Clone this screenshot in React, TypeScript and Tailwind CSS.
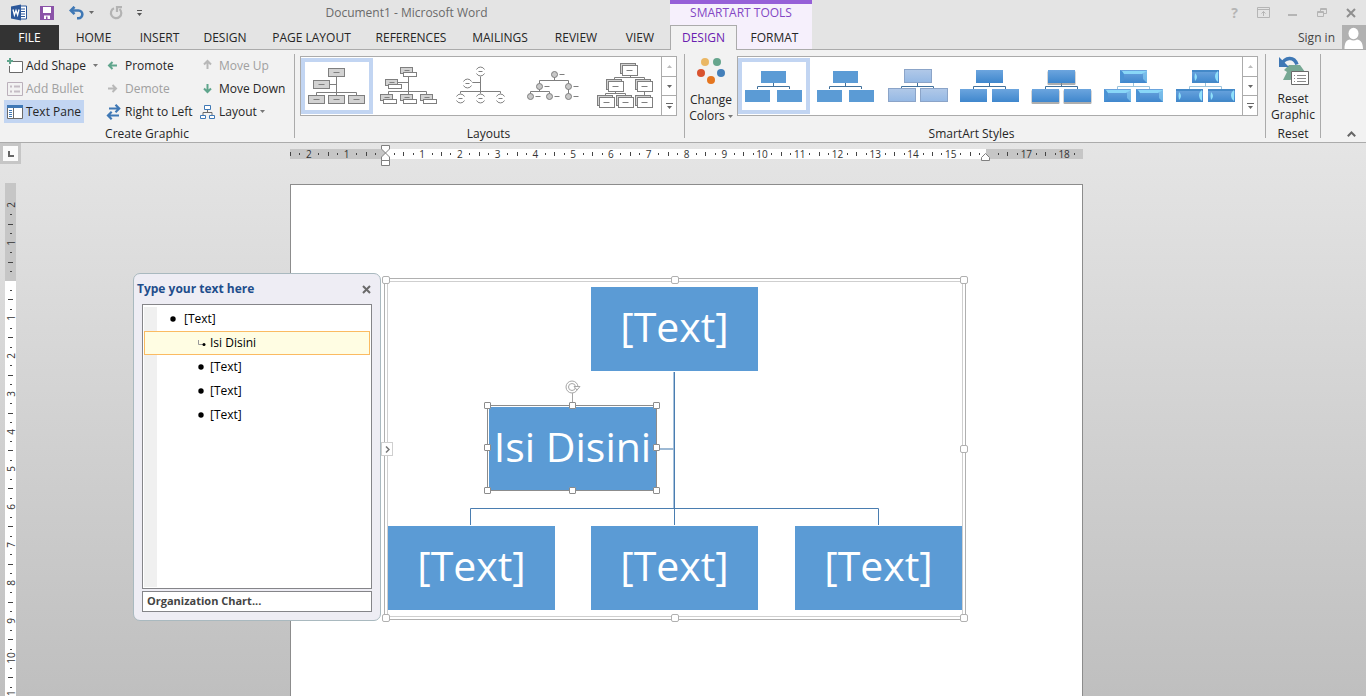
import type { ReactNode } from 'react';
import clsx from 'clsx';

/* ---------- shared bits ---------- */

function Caret({ className }: { className?: string }) {
  return (
    <svg viewBox="0 0 5 3" className={clsx('h-[3px] w-[5px] shrink-0', className)} fill="currentColor">
      <path d="M0 0h5L2.5 3z" />
    </svg>
  );
}

interface RibbonGroupProps {
  title: string;
  className?: string;
  children: ReactNode;
}

function RibbonGroup({ title, className, children }: RibbonGroupProps) {
  return (
    <section
      aria-label={title}
      className={clsx('my-1 flex flex-col justify-between border-r border-[#ababab]', className)}
    >
      {children}
      <h2 className="text-center leading-2 text-[#262626]">{title}</h2>
    </section>
  );
}

/* ---------- title bar and tabs ---------- */

function QuickAccess() {
  return (
    <div className="flex w-[143px] items-center pl-[10px]">
      <button aria-label="Word" className="mr-[13px]">
        <svg viewBox="0 0 17 17" className="size-[17px]">
          <path d="M9 2h7.5v13H9z" fill="#fff" stroke="#2b579a" />
          <path d="M11 5h4M11 7.5h4M11 10h4M11 12.5h4" stroke="#2b579a" />
          <path d="M1 2.5 11 .5v16L1 14.5z" fill="#2b579a" />
          <path d="M3 5.500 4.400 11 6 6.500 7.600 11 9 5.500" fill="none" stroke="#fff" strokeWidth="1.3" />
        </svg>
      </button>
      <button aria-label="Save" className="mr-[15px]">
        <svg viewBox="0 0 14 14" className="size-[14px]">
          <path d="M0 0h14v14H0z" fill="#8b53a8" />
          <path d="M3 1h8v6H3zM4 9.5h6V13H4z" fill="#fff" />
          <path d="M6 10.5h1.500V13H6z" fill="#8b53a8" />
        </svg>
      </button>
      <button aria-label="Undo" className="flex items-center gap-[5px] text-[#6a6a6a]">
        <svg viewBox="0 0 15 14" className="h-[14px] w-[15px]" fill="none" stroke="#3f78b5" strokeWidth="2.6">
          <path d="M2 4.5h7.500a3.800 3.800 0 0 1 0 7.700H8" />
          <path d="M5.500.8 1.800 4.500l3.700 3.700" />
        </svg>
        <Caret />
      </button>
      <button aria-label="Repeat" className="ml-[15px]">
        <svg viewBox="0 0 14 14" className="size-[14px]" fill="none" stroke="#b3b3b3" strokeWidth="2.2">
          <path d="M5 2.200A5.200 5.200 0 1 0 10.500 3" />
          <path d="M8 6V1.200h5" />
        </svg>
      </button>
      <button aria-label="Customize Quick Access Toolbar" className="ml-[14px] text-[#555]">
        <svg viewBox="0 0 5 6" className="h-[6px] w-[5px]" fill="currentColor">
          <path d="M0 0h5v1H0zM0 3h5L2.500 6z" />
        </svg>
      </button>
    </div>
  );
}

function WindowButtons() {
  return (
    <div className="ml-auto flex items-center text-[#b5b5b5]">
      <button aria-label="Help" className="w-[29px] text-sm font-bold leading-none">
        ?
      </button>
      <button aria-label="Ribbon Display Options" className="flex w-[29px] justify-center">
        <svg viewBox="0 0 13 11" className="h-[11px] w-[13px]" fill="none" stroke="currentColor">
          <path d="M.5.5h12v10H.5zM.5 2.500h12M6.500 9V4.500M4.500 6.500l2-2 2 2" />
        </svg>
      </button>
      <button aria-label="Minimize" className="flex w-[29px] justify-center">
        <span className="mt-1 h-[2px] w-[9px] bg-current" />
      </button>
      <button aria-label="Restore Down" className="flex w-[29px] justify-center">
        <svg viewBox="0 0 10 10" className="size-[10px]" fill="none" stroke="currentColor">
          <path d="M.5 3.500h6v5h-6zM.5 4.500h6M3.500 3V.5h6v5H7M3.500 1.500h6" />
        </svg>
      </button>
      <button aria-label="Close" className="flex w-[30px] justify-center text-[#8f8f8f]">
        <svg viewBox="0 0 10 10" className="size-[10px]" stroke="currentColor" strokeWidth="2">
          <path d="m1 1 8 8M9 1 1 9" />
        </svg>
      </button>
    </div>
  );
}

const tabs = [
  { label: 'HOME', width: 'w-[69px]' },
  { label: 'INSERT', width: 'w-[63px]' },
  { label: 'DESIGN', width: 'w-[68px]' },
  { label: 'PAGE LAYOUT', width: 'w-[105px]' },
  { label: 'REFERENCES', width: 'w-[94px]' },
  { label: 'MAILINGS', width: 'w-[84px]' },
  { label: 'REVIEW', width: 'w-[68px]' },
  { label: 'VIEW', width: 'w-[60px]' },
];

function Header() {
  return (
    <header className="bg-[#e4e4e4]">
      <div className="flex h-[25px]">
        <QuickAccess />
        <h1 className="flex w-[527px] items-center justify-center text-[#6a6a6a]">Document1 - Microsoft Word</h1>
        <div className="w-[142px] border-t-4 border-[#9660d8] bg-[#f6f0fc] text-center leading-[18px] text-[#8347c4]">
          SMARTART TOOLS
        </div>
        <WindowButtons />
      </div>
      <nav className="flex h-[25px] text-[#262626]">
        <button className="w-[59px] bg-[#333333] text-white">FILE</button>
        <div className="flex border-b border-[#ababab] pt-[2px]">
          {tabs.map((tab) => (
            <button key={tab.label} className={tab.width}>
              {tab.label}
            </button>
          ))}
        </div>
        <button className="w-[67px] border-x border-t border-[#ababab] bg-[#f2f2f2] text-[#6a20b0]">DESIGN</button>
        <button className="w-[75px] border-b border-[#ababab] bg-[#f6f0fc] pt-[2px]">FORMAT</button>
        <div className="flex flex-1 items-center justify-end gap-[7px] border-b border-[#ababab]">
          <button className="pt-px text-[#444]">Sign in</button>
          <button aria-label="Account" className="bg-[#b1b1b1]">
            <svg viewBox="0 0 24 24" className="size-6" fill="#fff">
              <ellipse cx="11.5" cy="8.5" rx="5" ry="5.7" />
              <path d="M2.500 24c0-6 2-9.500 5.500-9.500 2 1.300 5 1.300 7 0 3.500 0 6 3.500 6 9.500z" />
            </svg>
          </button>
        </div>
      </nav>
    </header>
  );
}

/* ---------- ribbon: create graphic ---------- */

interface CommandProps {
  label: string;
  icon: ReactNode;
  disabled?: boolean;
  active?: boolean;
  caret?: string;
}

function Command({ label, icon, disabled, active, caret }: CommandProps) {
  return (
    <button
      disabled={disabled}
      className={clsx(
        'flex h-[23px] items-center gap-[3px] whitespace-nowrap px-[3px]',
        disabled ? 'text-[#a0a0a0]' : 'text-[#262626]',
        active && 'bg-[#c2d5f2]',
      )}
    >
      <svg viewBox="0 0 16 16" className="size-4 shrink-0" fill="none">
        {icon}
      </svg>
      {label}
      {caret && <Caret className={clsx('text-[#777]', caret)} />}
    </button>
  );
}

function CreateGraphic() {
  return (
    <RibbonGroup title="Create Graphic" className="w-[295px]">
      <div className="flex pl-1">
        <div className="flex w-[99px] flex-col items-start">
          <Command
            label="Add Shape"
            caret="ml-1"
            icon={
              <>
                <path d="M6 3.500h9.500v11h-13V8" fill="#fff" />
                <path d="M6 3.500h9.500v11h-13V8" stroke="#6a6a6a" />
                <path d="M3 0v6M0 3h6" stroke="#5fa58c" strokeWidth="2" />
              </>
            }
          />
          <Command
            label="Add Bullet"
            disabled
            icon={
              <>
                <path d="M.5 1.500h15v13H.5z" stroke="#bbb0bb" />
                <path d="M3 5.500h2M3 10.500h2M7 5.500h6M7 10.500h6" stroke="#c4bcc4" strokeWidth="2" />
              </>
            }
          />
          <Command
            label="Text Pane"
            active
            icon={
              <>
                <path d="M.5 1.500h15v13H.5z" fill="#fff" stroke="#6a6a6a" />
                <path d="M0 1h16v3H0z" fill="#3f78b5" />
                <path d="M6.500 4v10" stroke="#6a6a6a" />
                <path d="M2 6.500h3M2 8.500h3M2 10.500h3M2 12.500h3" stroke="#3f78b5" />
              </>
            }
          />
        </div>
        <div className="flex w-[94px] flex-col items-start">
          <Command
            label="Promote"
            icon={<path d="M11 7.500H3M6.500 4 3 7.500 6.500 11" stroke="#5fa58c" strokeWidth="2" />}
          />
          <Command
            label="Demote"
            disabled
            icon={<path d="M2 7.500h8M6.500 4 10 7.500 6.500 11" stroke="#b8b8b8" strokeWidth="2" />}
          />
          <Command
            label="Right to Left"
            icon={
              <path
                d="M3 4.500h10M9.500.8l3.700 3.700-3.700 3.700M13 11.500H2M5.700 7.800 2 11.500l3.700 3.700"
                stroke="#3f78b5"
                strokeWidth="2.2"
              />
            }
          />
        </div>
        <div className="flex flex-col items-start">
          <Command
            label="Move Up"
            disabled
            icon={<path d="M7.500 11V3M4 6.500 7.500 3 11 6.500" stroke="#b8b8b8" strokeWidth="2" />}
          />
          <Command
            label="Move Down"
            icon={<path d="M7.500 3v8M4 7.500 7.500 11 11 7.500" stroke="#5fa58c" strokeWidth="2" />}
          />
          <Command
            label="Layout"
            caret="ml-0"
            icon={
              <>
                <path d="M4.500 1.500h6v4h-6zM.5 11.500h5v3h-5zM9.500 11.500h5v3h-5z" fill="#fff" stroke="#3f78b5" />
                <path d="M7.500 6v2.500M3 11V8.500h9V11" stroke="#6a6a6a" />
              </>
            }
          />
        </div>
      </div>
    </RibbonGroup>
  );
}

/* ---------- ribbon: galleries ---------- */

interface Point {
  x: number;
  y: number;
}

function Connectors({ d }: { d: string }) {
  return <path d={d} fill="none" stroke="#7f7f7f" />;
}

function GreyBox({ x, y }: Point) {
  return (
    <g stroke="#7f7f7f">
      <rect x={x} y={y} width="16" height="8" fill="#d2d2d2" />
      <path d={`M${x + 5} ${y + 4}h6`} />
    </g>
  );
}

function TitledBox({ x, y }: Point) {
  return (
    <g stroke="#7f7f7f">
      <rect x={x} y={y} width="12" height="6" fill="#d2d2d2" />
      <path d={`M${x + 4} ${y + 3}h5`} />
      <rect x={x + 3} y={y + 5} width="13" height="4" fill="#fff" />
    </g>
  );
}

function HalfCircles({ x, y }: Point) {
  return (
    <g stroke="#7f7f7f" fill="none">
      <circle cx={x} cy={y} r="5" fill="#fff" stroke="none" />
      <path d={`M${x - 4} ${y - 2}a4.500 4.500 0 0 1 8 0M${x - 4} ${y + 2}a4.500 4.500 0 0 0 8 0M${x - 2} ${y}h4`} />
    </g>
  );
}

function Dot({ x, y }: Point) {
  return (
    <g stroke="#7f7f7f">
      <circle cx={x} cy={y} r="3" fill="#c8c8c8" />
      <path d={`M${x + 5} ${y}h5`} />
    </g>
  );
}

function StackedBox({ x, y }: Point) {
  return (
    <g stroke="#7f7f7f">
      <rect x={x} y={y} width="15" height="10" fill="#d2d2d2" />
      <rect x={x + 2} y={y + 2} width="15" height="10" fill="#fff" />
      <path d={`M${x + 6} ${y + 7}h6`} />
    </g>
  );
}

const layouts: { name: string; art: ReactNode }[] = [
  {
    name: 'Organization Chart',
    art: (
      <>
        <Connectors d="M35.500 18v20M15.500 38v-3.500h40V38M28 26.500h8" />
        <GreyBox x={27.5} y={10.5} />
        <GreyBox x={12.5} y={22.5} />
        <GreyBox x={7.5} y={37.5} />
        <GreyBox x={27.5} y={37.5} />
        <GreyBox x={47.5} y={37.5} />
      </>
    ),
  },
  {
    name: 'Name and Title Organization Chart',
    art: (
      <>
        <Connectors d="M35.500 18v19M15.500 37v-3.500h38V37M24 24.500h12" />
        <TitledBox x={27.5} y={9.5} />
        <TitledBox x={12.5} y={21.5} />
        <TitledBox x={7.5} y={36.5} />
        <TitledBox x={27.5} y={36.5} />
        <TitledBox x={47.5} y={36.5} />
      </>
    ),
  },
  {
    name: 'Half Circle Organization Chart',
    art: (
      <>
        <Connectors d="M35.500 18v18M15.500 36.500v-3h40v3M27 24.500h8" />
        <HalfCircles x={35.5} y={13.5} />
        <HalfCircles x={22.5} y={25.5} />
        <HalfCircles x={15.5} y={40.5} />
        <HalfCircles x={35.5} y={40.5} />
        <HalfCircles x={55.5} y={40.5} />
      </>
    ),
  },
  {
    name: 'Circle Picture Hierarchy',
    art: (
      <>
        <Connectors d="M37.500 19v3.500M22.500 26v-3.500h29V36M22.500 31v2.500M13.500 36v-2.500h19V36" />
        <Dot x={37.5} y={16.5} />
        <Dot x={22.5} y={28.5} />
        <Dot x={51.5} y={28.5} />
        <Dot x={13.5} y={38.5} />
        <Dot x={32.5} y={38.5} />
        <Dot x={51.5} y={38.5} />
      </>
    ),
  },
  {
    name: 'Hierarchy',
    art: (
      <>
        <Connectors d="M41.500 17v2.500M25.500 22v-2.500h30V38M26.500 33v2.500M16.500 38v-2.500h20V38" />
        <StackedBox x={31.5} y={5.5} />
        <StackedBox x={17.5} y={21.5} />
        <StackedBox x={46.5} y={21.5} />
        <StackedBox x={8.5} y={37.5} />
        <StackedBox x={27.5} y={37.5} />
        <StackedBox x={46.5} y={37.5} />
      </>
    ),
  },
];

type StyleKind = 'flat' | 'subtle' | 'gradient' | 'shadow' | 'polished' | 'inset';

function StyleArt({ kind }: { kind: StyleKind }) {
  const boxes =
    kind === 'flat'
      ? [
          [23, 13, 25, 12],
          [7, 32, 25, 12],
          [39, 32, 25, 12],
        ]
      : [
          [22, 12, 27, 13],
          [6, 31, 27, 13],
          [38, 31, 27, 13],
        ];
  const fills: Record<StyleKind, string> = {
    flat: '#5b9bd5',
    subtle: 'url(#subtleFill)',
    gradient: 'url(#blueFill)',
    shadow: 'url(#blueFill)',
    polished: 'url(#blueFill)',
    inset: 'url(#blueFill)',
  };

  return (
    <>
      <path
        d="M35.500 25v3.500M19.500 31v-2.500h32V31"
        fill="none"
        stroke={kind === 'polished' || kind === 'inset' ? '#9cc4dc' : '#41719c'}
      />
      {boxes.map(([x, y, w, h]) => (
        <g key={`${x}-${y}`}>
          {kind === 'shadow' && (
            <rect x={x - 0.5} y={y + 1} width={w + 1} height={h + 1} rx="1" fill="#8c8c8c" opacity="0.7" />
          )}
          <rect x={x} y={y} width={w} height={h} fill={fills[kind]} />
          {kind === 'subtle' && (
            <rect x={x + 0.5} y={y - 0.5} width={w} height={h} fill="none" stroke="#8ba4c8" />
          )}
          {kind === 'polished' && (
            <>
              <path d={`M${x} ${y}v${h}l4-3v-7z`} fill="#4a92d4" />
              <path d={`M${x + 2} ${y + 1}h${w - 2}l-5 3h-${w - 9}z`} fill="#8fe0fb" opacity="0.85" />
              <path d={`M${x + w} ${y}v${h}l-4-4v-6z`} fill="#8ad2f5" opacity="0.6" />
            </>
          )}
          {kind === 'inset' && (
            <>
              <path d={`M${x} ${y}h${w}v2h-${w}z`} fill="#4489c8" />
              <path d={`M${x} ${y + h}h${w}l-3-2h-${w - 6}z`} fill="#4489c8" />
              <path
                d={`M${x + 3} ${y + 3}q4 4 0 8q-1-4 0-8zM${x + w - 1} ${y + 1}v${h - 2}l-2-2q-2-4 0-7z`}
                fill="#8fe0fb"
              />
            </>
          )}
        </g>
      ))}
    </>
  );
}

const styles: { name: string; kind: StyleKind }[] = [
  { name: 'Simple Fill', kind: 'flat' },
  { name: 'White Outline', kind: 'flat' },
  { name: 'Subtle Effect', kind: 'subtle' },
  { name: 'Moderate Effect', kind: 'gradient' },
  { name: 'Intense Effect', kind: 'shadow' },
  { name: 'Polished', kind: 'polished' },
  { name: 'Inset', kind: 'inset' },
];

function Gallery({ items }: { items: { name: string; art: ReactNode }[] }) {
  return (
    <div className="flex h-[60px] border border-[#ababab] bg-white">
      <div className="flex py-px">
        {items.map((item, i) => (
          <button
            key={item.name}
            aria-label={item.name}
            className={clsx('w-[72px] border-4', i === 0 ? 'border-[#c2d5f2]' : 'border-transparent')}
          >
            <svg viewBox="4 4 64 48" className="h-12 w-16">
              {item.art}
            </svg>
          </button>
        ))}
      </div>
      <div className="flex w-[15px] flex-col divide-y divide-[#ababab] border-l border-[#ababab] text-[#666]">
        <button aria-label="Previous row" className="flex flex-1 items-center justify-center text-[#bcbcbc]">
          <Caret className="rotate-180" />
        </button>
        <button aria-label="Next row" className="flex flex-1 items-center justify-center">
          <Caret />
        </button>
        <button aria-label="More" className="flex flex-1 flex-col items-center justify-center gap-[2px]">
          <span className="h-px w-[7px] bg-current" />
          <Caret />
        </button>
      </div>
    </div>
  );
}

function Ribbon() {
  return (
    <div className="flex h-[93px] border-b border-[#ababab] bg-[#f2f2f2]">
      <svg className="absolute size-0">
        <defs>
          <linearGradient id="blueFill" x1="0" y1="0" x2="0" y2="1">
            <stop offset="0" stopColor="#6ca5de" />
            <stop offset="1" stopColor="#3f87cd" />
          </linearGradient>
          <linearGradient id="subtleFill" x1="0" y1="0" x2="0" y2="1">
            <stop offset="0" stopColor="#b0c8e8" />
            <stop offset="1" stopColor="#94b8e4" />
          </linearGradient>
        </defs>
      </svg>

      <CreateGraphic />

      <RibbonGroup title="Layouts" className="pl-[5px] pr-[7px] pt-[2px]">
        <Gallery items={layouts} />
      </RibbonGroup>

      <RibbonGroup title="SmartArt Styles" className="pr-[7px] pt-[2px]">
        <div className="flex">
          <button className="w-[52px] text-center leading-4 text-[#262626]">
            <svg viewBox="0 0 28 28" className="mx-auto mb-[7px] mt-px h-7 w-7">
              <circle cx="8" cy="5" r="4" fill="#eab765" />
              <circle cx="20" cy="5" r="4" fill="#66a58d" />
              <circle cx="4" cy="16" r="4" fill="#d9532f" />
              <circle cx="24" cy="16" r="4" fill="#4480ba" />
              <circle cx="14" cy="23" r="4" fill="#e5761f" />
            </svg>
            Change
            <span className="flex items-center justify-center gap-[3px]">
              Colors
              <Caret className="text-[#777]" />
            </span>
          </button>
          <Gallery items={styles.map(({ name, kind }) => ({ name, art: <StyleArt kind={kind} /> }))} />
        </div>
      </RibbonGroup>

      <RibbonGroup title="Reset" className="w-[55px] pt-[2px]">
        <button className="text-center leading-4 text-[#262626]">
          <svg viewBox="0 0 32 30" className="mx-auto mb-[5px] h-[30px] w-8" fill="none">
            <path d="m12 9 11 0 5 7h-9v6l-6 2H6l4-8-3-2z" fill="#77a894" />
            <path d="M4.500 8.500C8 1 17 0 20 8.500" stroke="#3f78b5" strokeWidth="3.5" />
            <path d="M2 1v10h10z" fill="#3f78b5" />
            <path d="M14.500 15.500h17v13h-17z" fill="#fff" stroke="#6a6a6a" />
            <path d="M17 19.500h1M20 19.500h9M17 22.500h1M20 22.500h9M17 25.500h1M20 25.500h9" stroke="#8a8a8a" />
          </svg>
          Reset
          <br />
          Graphic
        </button>
      </RibbonGroup>

      <button aria-label="Collapse the Ribbon" className="ml-auto self-end pb-[5px] pr-[10px]">
        <svg viewBox="0 0 9 6" className="h-[6px] w-[9px]" fill="none" stroke="#666" strokeWidth="2">
          <path d="m.8 5.200 3.700-3.700 3.700 3.700" />
        </svg>
      </button>
    </div>
  );
}

/* ---------- rulers ---------- */

const horizontalMarks = Array.from({ length: 21 }, (_, i) => i - 2);
const verticalMarks = Array.from({ length: 14 }, (_, i) => i - 2);

function HorizontalRuler() {
  return (
    <div className="relative h-[10px] bg-white text-[10px] leading-[10px] text-[#333]">
      <div className="absolute inset-0 flex justify-between">
        <span className="w-[96px] bg-[#c6c6c6]" />
        <span className="w-[97px] bg-[#c6c6c6]" />
      </div>
      <div className="relative grid grid-cols-21">
        {horizontalMarks.map((n) => (
          <div key={n} className="grid h-[10px] grid-cols-4 items-center">
            <span className="h-1 w-px bg-[#444]" />
            <span className="h-[2px] w-px bg-[#444]" />
            <span className="flex w-0 justify-center">{n === 0 || n === 16 ? '' : Math.abs(n)}</span>
            <span className="h-[2px] w-px bg-[#444]" />
          </div>
        ))}
      </div>
      <svg viewBox="0 0 10 22" className="absolute -top-1 left-[91px] h-[22px] w-[10px]" fill="#fff" stroke="#7f7f7f">
        <path d="M.5.500h8v3.500l-4 4-4-4zM.5 15.500V12l4-4 4 4v3.500zM.5 15.500h8v5h-8z" />
      </svg>
      <svg viewBox="0 0 10 8" className="absolute left-[691px] top-1 h-2 w-[10px]" fill="#fff" stroke="#7f7f7f">
        <path d="M.5 7.500V4.500l4-4 4 4v3z" />
      </svg>
    </div>
  );
}

function VerticalRuler() {
  return (
    <div className="flex w-[22px] shrink-0 flex-col">
      <button
        aria-label="Tab stop"
        className="flex size-[21px] items-center justify-center border-[3px] border-[#c6c6c6] bg-[#fbfbfb]"
      >
        <span className="size-[6px] border-b-2 border-l-2 border-[#666]" />
      </button>
      <div className="relative ml-[5px] mt-[19px] w-[11px] flex-1 bg-white text-[10px] leading-[10px] text-[#333]">
        <div className="h-[98px] bg-[#c6c6c6]" />
        <div className="absolute inset-x-0 top-[3px] grid h-[529px] grid-rows-14">
          {verticalMarks.map((n) => (
            <div key={n} className="grid grid-rows-4 justify-items-center">
              <span className={clsx('h-px w-[5px]', n !== -2 && 'bg-[#444]')} />
              <span className={clsx('h-px w-[2px]', n !== -2 && 'bg-[#444]')} />
              <span className="flex h-0 items-center justify-center">
                <span className="-rotate-90">{n === 0 ? '' : Math.abs(n)}</span>
              </span>
              <span className="h-px w-[2px] bg-[#444]" />
            </div>
          ))}
        </div>
      </div>
    </div>
  );
}

/* ---------- text pane ---------- */

const entries = [
  { text: '[Text]', level: 0 },
  { text: 'Isi Disini', level: 1, assistant: true },
  { text: '[Text]', level: 1 },
  { text: '[Text]', level: 1 },
  { text: '[Text]', level: 1 },
];

function TextPane() {
  return (
    <aside className="absolute -left-[158px] top-[88px] flex h-[348px] w-[248px] flex-col rounded-[7px] border border-[#a9b9bf] bg-[#eeedf4] pb-2">
      <div className="flex h-[30px] items-center justify-between pl-[3px] pr-[9px]">
        <h2 className="font-bold text-[#1f4e8c]">Type your text here</h2>
        <button aria-label="Close">
          <svg viewBox="0 0 9 9" className="size-[9px]" stroke="#6a6a6a" strokeWidth="2">
            <path d="m1 1 7 7M8 1 1 8" />
          </svg>
        </button>
      </div>
      <div className="mx-2 flex-1 border border-[#858589] bg-white px-px pb-px pt-[2px]">
        <ul className="h-full bg-linear-to-r from-[#f0f0f0] from-[13px] to-white to-[13px] text-black">
          {entries.map((entry, i) => (
            <li
              key={i}
              className={clsx(
                'flex h-6 items-center border',
                entry.level === 0 ? 'gap-2 pl-[25px]' : 'gap-1 pl-[53px]',
                entry.assistant ? 'border-[#fbbb62] bg-[#fffde3]' : 'border-transparent',
              )}
            >
              {entry.assistant ? (
                <svg viewBox="0 0 8 7" className="h-[7px] w-2">
                  <path d="M.5 0v4.500H5" fill="none" stroke="#999" />
                  <circle cx="6" cy="4.5" r="1.5" />
                </svg>
              ) : (
                <svg viewBox="0 0 6 6" className={clsx('size-[6px]', entry.level === 1 && 'mr-[2px]')}>
                  <circle cx="3" cy="3" r="2.7" />
                </svg>
              )}
              <span>{entry.text}</span>
            </li>
          ))}
        </ul>
      </div>
      <button className="mx-2 mt-[2px] h-[21px] border border-[#858589] bg-white px-1 text-left text-[11px] font-bold text-[#444]">
        Organization Chart...
      </button>
    </aside>
  );
}

/* ---------- diagram ---------- */

const shapes = [
  { text: '[Text]', place: 'left-[300px] top-[102px]' },
  { text: 'Isi Disini', place: 'left-[198px] top-[222px]' },
  { text: '[Text]', place: 'left-[97px] top-[341px]' },
  { text: '[Text]', place: 'left-[300px] top-[341px]' },
  { text: '[Text]', place: 'left-[504px] top-[341px]' },
];

const frameHandles = [
  'left-[91px] top-[91px]',
  'left-[380px] top-[91px]',
  'left-[669px] top-[91px]',
  'left-[669px] top-[260px]',
  'left-[91px] top-[429px]',
  'left-[380px] top-[429px]',
  'left-[669px] top-[429px]',
];

const shapeHandles = [
  'left-[193px] top-[217px]',
  'left-[278px] top-[217px]',
  'left-[362px] top-[217px]',
  'left-[193px] top-[259px]',
  'left-[362px] top-[259px]',
  'left-[193px] top-[302px]',
  'left-[278px] top-[302px]',
  'left-[362px] top-[302px]',
];

function Diagram() {
  return (
    <>
      <div className="absolute left-[93px] top-[93px] h-[342px] w-[582px] border border-[#b0b0b0] p-[2px]">
        <div className="h-full border border-[#cfcfcf]" />
      </div>
      <svg viewBox="0 0 410 154" className="absolute left-[179px] top-[187px] h-[154px] w-[410px]" fill="none">
        <path d="M203.500 0v136" stroke="#a9c3dd" />
        <path d="M204.500 0v153M.5 153v-16.500h408V153" stroke="#4a7db0" />
        <path d="M186 77h18" stroke="#9db9d4" strokeWidth="2" />
      </svg>
      {shapes.map((shape) => (
        <div
          key={shape.place}
          className={clsx(
            'absolute flex h-[84px] w-[167px] items-center justify-center whitespace-nowrap bg-[#5b9bd5] pb-[6px] text-[41px] text-white',
            shape.place,
          )}
        >
          {shape.text}
        </div>
      ))}
      {frameHandles.map((place) => (
        <span key={place} className={clsx('absolute size-2 rounded-[2px] border border-[#b0b0b0] bg-white', place)} />
      ))}
      <button
        aria-label="Toggle text pane"
        className="absolute left-[90px] top-[257px] flex h-[14px] w-[12px] items-center justify-center border border-[#cfcfcf] bg-white"
      >
        <svg viewBox="0 0 5 7" className="h-[7px] w-[5px]" fill="none" stroke="#777" strokeWidth="1.5">
          <path d="m1 .5 3 3-3 3" />
        </svg>
      </button>

      <div className="absolute left-[196px] top-[220px] h-[86px] w-[170px] border border-[#8c8c8c]" />
      <svg viewBox="0 0 16 22" className="absolute left-[274px] top-[195px] h-[22px] w-4" fill="none" stroke="#a6a6a6">
        <path d="M7.500 13v9" />
        <circle cx="7" cy="7" r="6" fill="#fff" />
        <circle cx="7" cy="7" r="3.5" />
        <path d="m9 6.500 3 3.500 3-3.500z" fill="#fff" />
      </svg>
      {shapeHandles.map((place) => (
        <span key={place} className={clsx('absolute size-[7px] rounded-[1px] border border-[#8c8c8c] bg-white', place)} />
      ))}
    </>
  );
}

export default function App() {
  return (
    <div className="flex h-screen flex-col overflow-hidden font-['Open_Sans','Noto_Sans',sans-serif] text-xs">
      <Header />
      <Ribbon />
      <main className="flex min-h-0 flex-1 overflow-hidden bg-linear-to-b from-[#e5e5e5] to-[#bfbfbf]">
        <VerticalRuler />
        <div className="flex flex-1 justify-center pr-[15px] pt-[6px]">
          <div className="flex w-[793px] shrink-0 flex-col">
            <HorizontalRuler />
            <div className="relative mt-[25px] flex-1 border-x border-t border-[#8c8c8c] bg-white">
              <Diagram />
              <TextPane />
            </div>
          </div>
        </div>
      </main>
    </div>
  );
}
